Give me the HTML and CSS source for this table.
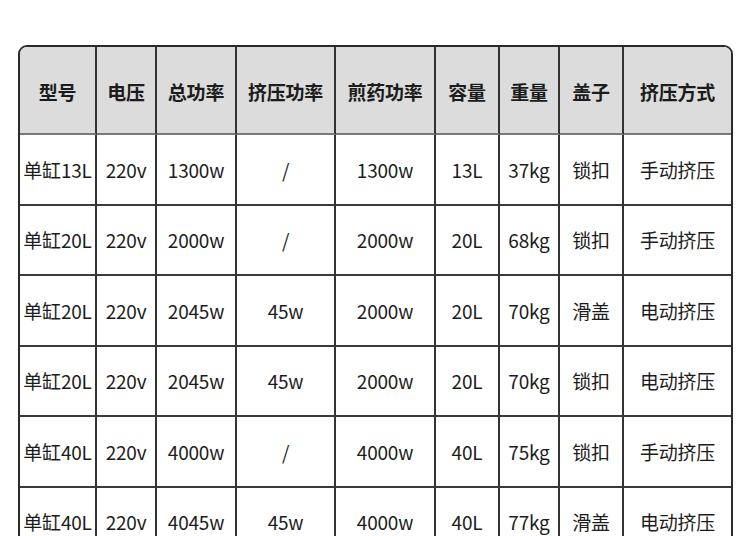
FILE: index.html
```html
<!DOCTYPE html>
<html lang="zh">
<head>
<meta charset="utf-8">
<link rel="stylesheet" href="styles.css">
</head>
<body>
<div class="table">
  <div class="cell head">型号</div>
  <div class="cell head">电压</div>
  <div class="cell head">总功率</div>
  <div class="cell head">挤压功率</div>
  <div class="cell head">煎药功率</div>
  <div class="cell head">容量</div>
  <div class="cell head">重量</div>
  <div class="cell head">盖子</div>
  <div class="cell head last">挤压方式</div>

  <div class="cell">单缸13L</div><div class="cell">220v</div><div class="cell">1300w</div><div class="cell">/</div><div class="cell">1300w</div><div class="cell">13L</div><div class="cell">37kg</div><div class="cell">锁扣</div><div class="cell last">手动挤压</div>

  <div class="cell">单缸20L</div><div class="cell">220v</div><div class="cell">2000w</div><div class="cell">/</div><div class="cell">2000w</div><div class="cell">20L</div><div class="cell">68kg</div><div class="cell">锁扣</div><div class="cell last">手动挤压</div>

  <div class="cell">单缸20L</div><div class="cell">220v</div><div class="cell">2045w</div><div class="cell">45w</div><div class="cell">2000w</div><div class="cell">20L</div><div class="cell">70kg</div><div class="cell">滑盖</div><div class="cell last">电动挤压</div>

  <div class="cell">单缸20L</div><div class="cell">220v</div><div class="cell">2045w</div><div class="cell">45w</div><div class="cell">2000w</div><div class="cell">20L</div><div class="cell">70kg</div><div class="cell">锁扣</div><div class="cell last">电动挤压</div>

  <div class="cell">单缸40L</div><div class="cell">220v</div><div class="cell">4000w</div><div class="cell">/</div><div class="cell">4000w</div><div class="cell">40L</div><div class="cell">75kg</div><div class="cell">锁扣</div><div class="cell last">手动挤压</div>

  <div class="cell">单缸40L</div><div class="cell">220v</div><div class="cell">4045w</div><div class="cell">45w</div><div class="cell">4000w</div><div class="cell">40L</div><div class="cell">77kg</div><div class="cell">滑盖</div><div class="cell last">电动挤压</div>
</div>
</body>
</html>
```

FILE: styles.css
```css
html, body {
  margin: 0;
  padding: 0;
  background: #ffffff;
}
body {
  padding: 45px 0 0 18px;
  font-family: "Noto Sans CJK SC", "Noto Sans", sans-serif;
  color: #1c1c1c;
  overflow: hidden;
  height: 536px;
  box-sizing: border-box;
}
.table {
  width: 715px;
  box-sizing: border-box;
  border: 2px solid #2a2a2a;
  border-radius: 9px 9px 0 0;
  overflow: hidden;
  display: grid;
  grid-template-columns: 77px 60px 80px 99px 100px 64px 60px 64px 107px;
  grid-template-rows: 88px;
  grid-auto-rows: 70.5px;
}
.cell {
  box-sizing: border-box;
  display: flex;
  align-items: center;
  justify-content: center;
  border-right: 2px solid #333;
  border-bottom: 2px solid #3a3a3a;
  font-size: 19px;
  white-space: nowrap;
  letter-spacing: -0.2px;
}
.cell.last {
  border-right: none;
}
.head {
  background: #dcdcdc;
  font-weight: 700;
  border-bottom-color: #7a7a7a;
  padding-top: 3px;
}
```
